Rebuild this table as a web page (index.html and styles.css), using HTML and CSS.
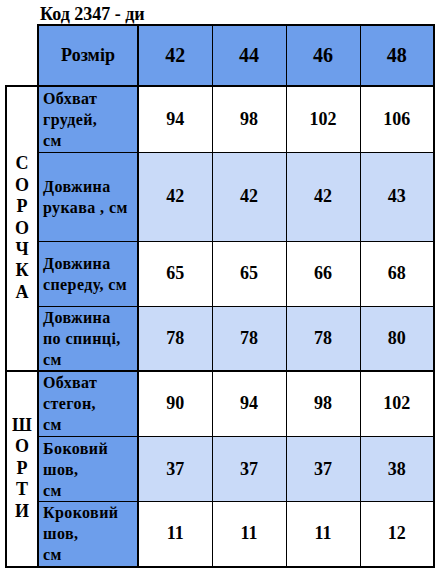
FILE: index.html
```html
<!DOCTYPE html>
<html lang="uk">
<head>
<meta charset="utf-8">
<link rel="stylesheet" href="styles.css">
</head>
<body>
<div class="page">
  <div class="title">Код 2347 - ди</div>
  <table class="sizes">
    <colgroup>
      <col class="c-group">
      <col class="c-name">
      <col class="c-val">
      <col class="c-val">
      <col class="c-val">
      <col class="c-val">
    </colgroup>
    <tr class="head r-h">
      <td class="corner"></td>
      <td class="hname">Розмір</td>
      <td class="hnum">42</td>
      <td class="hnum">44</td>
      <td class="hnum">46</td>
      <td class="hnum">48</td>
    </tr>
    <tr class="r1 gtop">
      <td class="grp" rowspan="4"><span>С</span><span>О</span><span>Р</span><span>О</span><span>Ч</span><span>К</span><span>А</span></td>
      <td class="name">Обхват<br>грудей,<br>см</td>
      <td class="val">94</td><td class="val">98</td><td class="val">102</td><td class="val">106</td>
    </tr>
    <tr class="r2 alt">
      <td class="name">Довжина<br>рукава , см</td>
      <td class="val">42</td><td class="val">42</td><td class="val">42</td><td class="val">43</td>
    </tr>
    <tr class="r3">
      <td class="name">Довжина<br>спереду, см</td>
      <td class="val">65</td><td class="val">65</td><td class="val">66</td><td class="val">68</td>
    </tr>
    <tr class="r4 alt">
      <td class="name">Довжина<br>по спинці,<br>см</td>
      <td class="val">78</td><td class="val">78</td><td class="val">78</td><td class="val">80</td>
    </tr>
    <tr class="r5 gtop">
      <td class="grp" rowspan="3"><span>Ш</span><span>О</span><span>Р</span><span>Т</span><span>И</span></td>
      <td class="name">Обхват<br>стегон,<br>см</td>
      <td class="val">90</td><td class="val">94</td><td class="val">98</td><td class="val">102</td>
    </tr>
    <tr class="r6 alt">
      <td class="name">Боковий<br>шов,<br>см</td>
      <td class="val">37</td><td class="val">37</td><td class="val">37</td><td class="val">38</td>
    </tr>
    <tr class="r7 last">
      <td class="name">Кроковий<br>шов,<br>см</td>
      <td class="val">11</td><td class="val">11</td><td class="val">11</td><td class="val">12</td>
    </tr>
  </table>
</div>
</body>
</html>
```

FILE: styles.css
```css
html, body {
  margin: 0;
  padding: 0;
  background: #ffffff;
}

body {
  font-family: "Liberation Serif", "Times New Roman", serif;
  font-weight: 700;
  color: #000000;
}

.page {
  padding: 4px 0 0 5px;
}

.title {
  font-size: 18px;
  line-height: 20px;
  padding-left: 35px;
}

.sizes {
  border-collapse: collapse;
  table-layout: fixed;
  width: 428px;
}

.c-group { width: 32px; }
.c-name { width: 100px; }
.c-val { width: 74px; }

.sizes td {
  border: 1px solid #000000;
  padding: 0;
  vertical-align: middle;
  background: #ffffff;
}

.sizes td.corner {
  border-top: none;
  border-left: none;
  border-bottom: 2px solid #000000;
  background: transparent;
}

.head td.hname,
.head td.hnum {
  background: #6d9eeb;
  border-top: 2px solid #000000;
  border-bottom: 2px solid #000000;
  text-align: center;
}

.head td.hname {
  border-left: 2px solid #000000;
  border-right: 2px solid #000000;
  font-size: 18px;
}

.head td.hnum {
  font-size: 20px;
}

.sizes td:last-child {
  border-right: 2px solid #000000;
}

.sizes td.grp {
  border-left: 2px solid #000000;
  border-right: 2px solid #000000;
  border-bottom: 2px solid #000000;
  text-align: center;
  font-size: 18px;
  line-height: 21.4px;
}

.grp span {
  display: block;
}

.gtop td {
  border-top: 2px solid #000000;
}

.last td {
  border-bottom: 2px solid #000000;
}

.sizes td.name {
  background: #6d9eeb;
  border-left: 2px solid #000000;
  border-right: 2px solid #000000;
  font-size: 16px;
  letter-spacing: 0.4px;
  line-height: 21px;
  padding-left: 4px;
  text-align: left;
  white-space: nowrap;
}

.sizes td.val {
  font-size: 18px;
  text-align: center;
}

.alt td.val {
  background: #c9daf8;
}

.r-h { height: 61px; }
.r1 { height: 66px; }
.r2 { height: 89px; }
.r3 { height: 65px; }
.r4 { height: 64px; }
.r5 { height: 66px; }
.r6 { height: 65px; }
.r7 { height: 65px; }
```
